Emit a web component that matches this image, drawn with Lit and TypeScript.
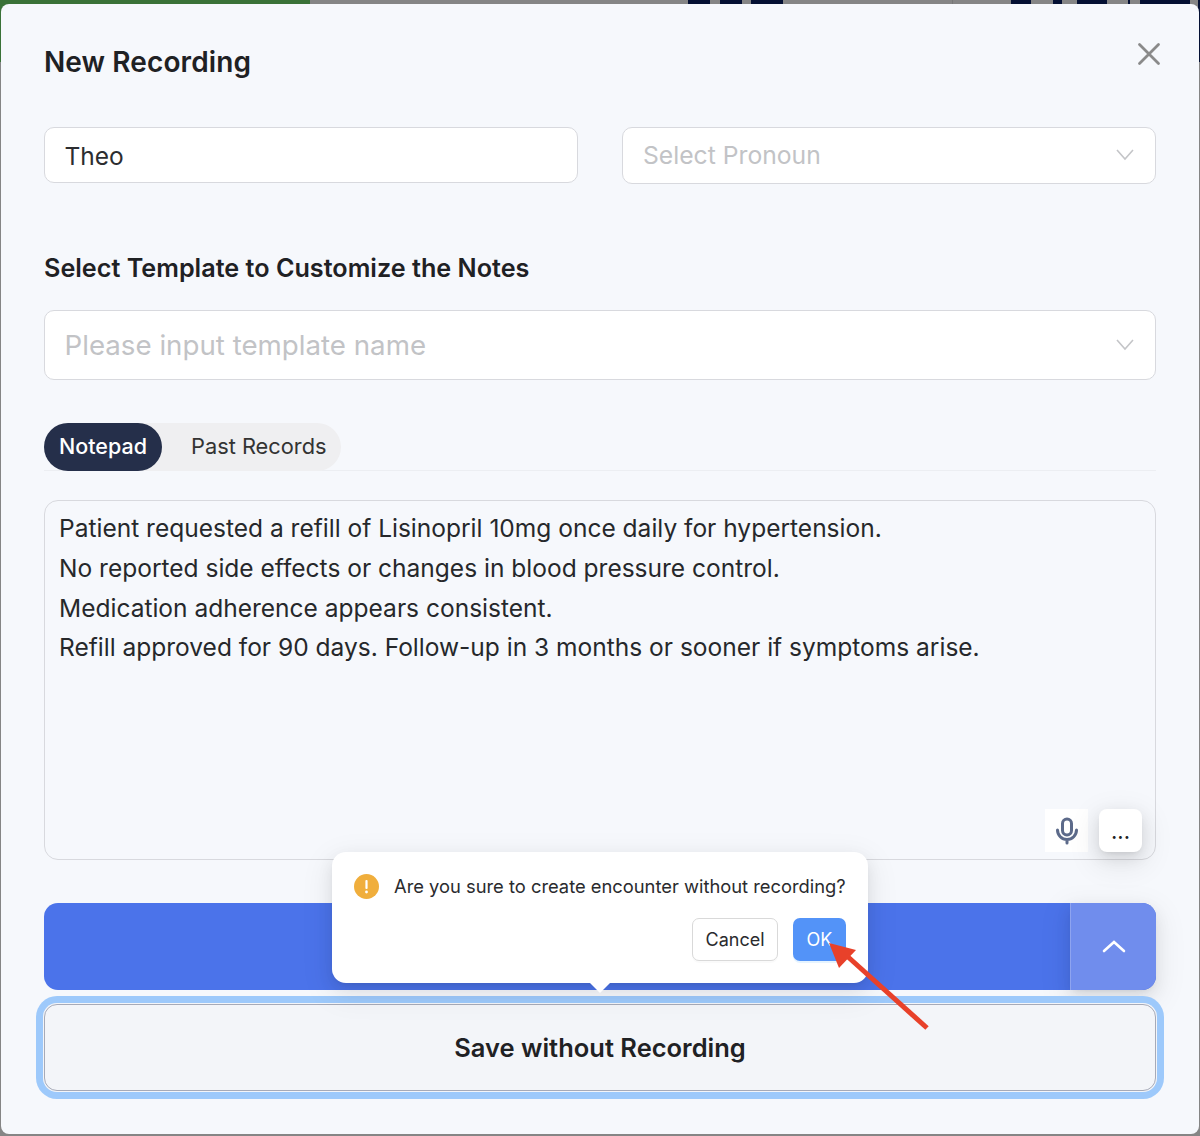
import { LitElement, html, css } from "lit";
import { customElement } from "lit/decorators.js";

@customElement("app-root")
export class AppRoot extends LitElement {
  static styles = css`
    :host { display: block; width: 1200px; height: 1136px; overflow: hidden; background: #858585; position: relative; font-family: Inter, "Liberation Sans", sans-serif; color: #26282b; }
    .green { position: absolute; left: 0; top: 0; width: 310px; height: 62px; background: #3a7238; }
    .dark { position: absolute; top: 0; height: 4px; background: #041033; }
    .edge { position: absolute; right: 0; top: 0; width: 2px; height: 62px; background: #041033; }
    .sep { position: absolute; left: 952px; top: 0; width: 1px; height: 4px; background: #777; }
    .modal { position: absolute; left: 1px; top: 4px; width: 1198px; height: 1130px; box-sizing: border-box; padding: 0 43px; background: #f6f8fc; border-radius: 8px; display: flex; flex-direction: column; }
    .head { height: 123px; flex: none; display: flex; justify-content: space-between; box-sizing: border-box; padding-top: 40px; }
    h1 { margin: 0; font-size: 28px; line-height: 36px; font-weight: 600; letter-spacing: 0.1px; color: #1f2124; }
    .x { width: 26px; height: 26px; margin: -3px -6px 0 0; }
    .row { display: flex; gap: 44px; }
    .field { box-sizing: border-box; background: #fff; border: 1px solid #d8d9de; border-radius: 10px; display: flex; align-items: center; justify-content: space-between; padding: 0 20px; font-size: 24.7px; color: #c2c3c6; }
    .row .field { flex: 0 0 534px; height: 57px; padding-bottom: 1px; }
    .row .theo { color: #2c2d30; height: 56px; font-size: 24.5px; padding: 2px 19px 0 19.5px; }
    .chev { width: 20px; height: 14px; }
    h2 { margin: 66px 0 24px; font-size: 25.2px; line-height: 36px; font-weight: 600; color: #1f2124; }
    .tmpl { height: 70px; font-size: 27.7px; padding-left: 19.5px; flex: none; }
    .tabs { margin-top: 43px; height: 48px; box-sizing: border-box; display: flex; border-bottom: 1px solid #eceef2; flex: none; }
    .tabgroup { display: flex; background: #efeff1; border-radius: 24px; height: 48px; }
    .tab { display: flex; align-items: center; font-size: 21.8px; border-radius: 24px; box-sizing: border-box; }
    .tab.on { background: #252f4a; color: #fff; padding: 0 15px 3px; font-weight: 500; font-size: 21.5px; }
    .tab.off { padding: 0 14.5px 3px 29px; color: #333; }
    .note { position: relative; margin-top: 29px; height: 360px; box-sizing: border-box; border: 1px solid #d8d9de; border-radius: 14px; padding: 8px 14px; font-size: 24.53px; line-height: 39.75px; color: #26282b; flex: none; }
    .tool { position: absolute; top: 308px; width: 43px; height: 43px; display: flex; align-items: center; justify-content: center; border-radius: 8px; }
    .mic { right: 67px; background: #fff; border-radius: 0; }
    .more { right: 13px; background: #fff; box-shadow: 0 6px 16px rgba(0,0,0,.1), 0 3px 6px -4px rgba(0,0,0,.14), 0 9px 28px 8px rgba(0,0,0,.06); font-size: 22px; line-height: 30px; color: #222; }
    .primary { margin-top: 43px; height: 87px; background: #4b73ea; border-radius: 14px; display: flex; justify-content: flex-end; flex: none; }
    .up { width: 86px; background: #708ded; border-left: 1px solid #8ea4f0; border-radius: 0 14px 14px 0; box-sizing: border-box; display: flex; align-items: center; justify-content: center; box-shadow: 0 6px 16px rgba(0,0,0,.08), 0 3px 6px -4px rgba(0,0,0,.12), 0 9px 28px 8px rgba(0,0,0,.05); }
    .save { margin-top: 14px; height: 87px; flex: none; box-sizing: border-box; border: 1px solid #a6aab8; border-radius: 13px; display: flex; align-items: center; justify-content: center; font-size: 25.5px; font-weight: 600; color: #1f2124; background: #f3f5f9; box-shadow: 0 0 0 1px #f3f5f9, 0 0 0 8px #9dc9fb; position: relative; }
    .pop { position: absolute; left: 332px; top: 852px; width: 536px; height: 131px; box-sizing: border-box; background: #fff; border-radius: 14px; box-shadow: 0 6px 16px rgba(0,0,0,.08), 0 3px 6px -4px rgba(0,0,0,.12), 0 9px 28px 8px rgba(0,0,0,.05); padding: 21px 22px 0; }
    .pop::after { content: ""; position: absolute; left: 258px; bottom: -10px; border: 10px solid transparent; border-top-color: #fff; border-bottom: 0; }
    .msg { display: flex; align-items: center; gap: 15px; font-size: 18.33px; line-height: 26px; color: #2a2b2e; white-space: nowrap; }
    .warn { width: 25px; height: 25px; flex: none; }
    .btns { display: flex; justify-content: flex-end; gap: 15px; margin-top: 19px; }
    .btn { height: 43px; box-sizing: border-box; border-radius: 7px; display: flex; align-items: center; justify-content: center; font-size: 18px; padding-bottom: 1px; }
    .cancel { width: 86px; border: 1px solid #d9d9d9; background: #fff; color: #2a2b2e; box-shadow: 0 2px 0 rgba(0,0,0,.02); }
    .ok { width: 53px; background: #5393f8; color: #fff; box-shadow: 0 2px 0 rgba(5,145,255,.1); }
    .arrow { position: absolute; left: 820px; top: 930px; width: 120px; height: 110px; }
  `;
  render() {
    return html`
      <div class="green"></div>
      <div class="edge"></div>
      ${[[688,22],[720,22],[751,32],[1011,20],[1053,9],[1077,30],[1128,2],[1140,50]].map(([l,w]) => html`<div class="dark" style="left:${l}px;width:${w}px"></div>`)}
      <div class="sep"></div>
      <div class="modal">
        <div class="head">
          <h1>New Recording</h1>
          <svg class="x" viewBox="0 0 26 26" fill="none" stroke="#8a8a8a" stroke-width="2.8" stroke-linecap="round"><path d="M3.5 3.5 L22.5 22.5 M22.5 3.5 L3.5 22.5"/></svg>
        </div>
        <div class="row">
          <div class="field theo">Theo</div>
          <div class="field">Select Pronoun
            <svg class="chev" viewBox="0 0 20 14" fill="none" stroke="#c4c5c8" stroke-width="1.6"><path d="M2 2 L10 11 L18 2"/></svg>
          </div>
        </div>
        <h2>Select Template to Customize the Notes</h2>
        <div class="field tmpl">Please input template name
          <svg class="chev" viewBox="0 0 20 14" fill="none" stroke="#c4c5c8" stroke-width="1.6"><path d="M2 2 L10 11 L18 2"/></svg>
        </div>
        <div class="tabs"><div class="tabgroup"><div class="tab on">Notepad</div><div class="tab off">Past Records</div></div></div>
        <div class="note">
          Patient requested a refill of Lisinopril 10mg once daily for hypertension.<br>
          No reported side effects or changes in blood pressure control.<br>
          Medication adherence appears consistent.<br>
          Refill approved for 90 days. Follow-up in 3 months or sooner if symptoms arise.
          <div class="tool mic"><svg width="24" height="28" viewBox="0 0 24 28" fill="none" stroke="#5c6a8a" stroke-width="3" stroke-linecap="round"><rect x="7.5" y="2" width="9" height="16" rx="4.5"/><path d="M2.5 13 a9.5 9.5 0 0 0 19 0 M12 23 V26"/></svg></div>
          <div class="tool more">...</div>
        </div>
        <div class="primary"><div class="up"><svg width="24" height="14" viewBox="0 0 24 14" fill="none" stroke="#fff" stroke-width="2.6" stroke-linecap="round"><path d="M2 11 L12 2 L22 11"/></svg></div></div>
        <div class="save">Save without Recording</div>
      </div>
      <div class="pop">
        <div class="msg">
          <svg class="warn" viewBox="0 0 25 25"><circle cx="12.5" cy="12.5" r="12.5" fill="#f0ae3c"/><rect x="11.4" y="6" width="2.2" height="9" rx="1" fill="#fff"/><circle cx="12.5" cy="18" r="1.4" fill="#fff"/></svg>
          <span>Are you sure to create encounter without recording?</span>
        </div>
        <div class="btns"><div class="btn cancel">Cancel</div><div class="btn ok">OK</div></div>
      </div>
      <svg class="arrow" viewBox="0 0 120 110" fill="none"><path d="M107 98 L27 26" stroke="#e8412a" stroke-width="5"/><path d="M9 13 L36 20 L19 38 Z" fill="#e8412a"/></svg>
    `;
  }
}
